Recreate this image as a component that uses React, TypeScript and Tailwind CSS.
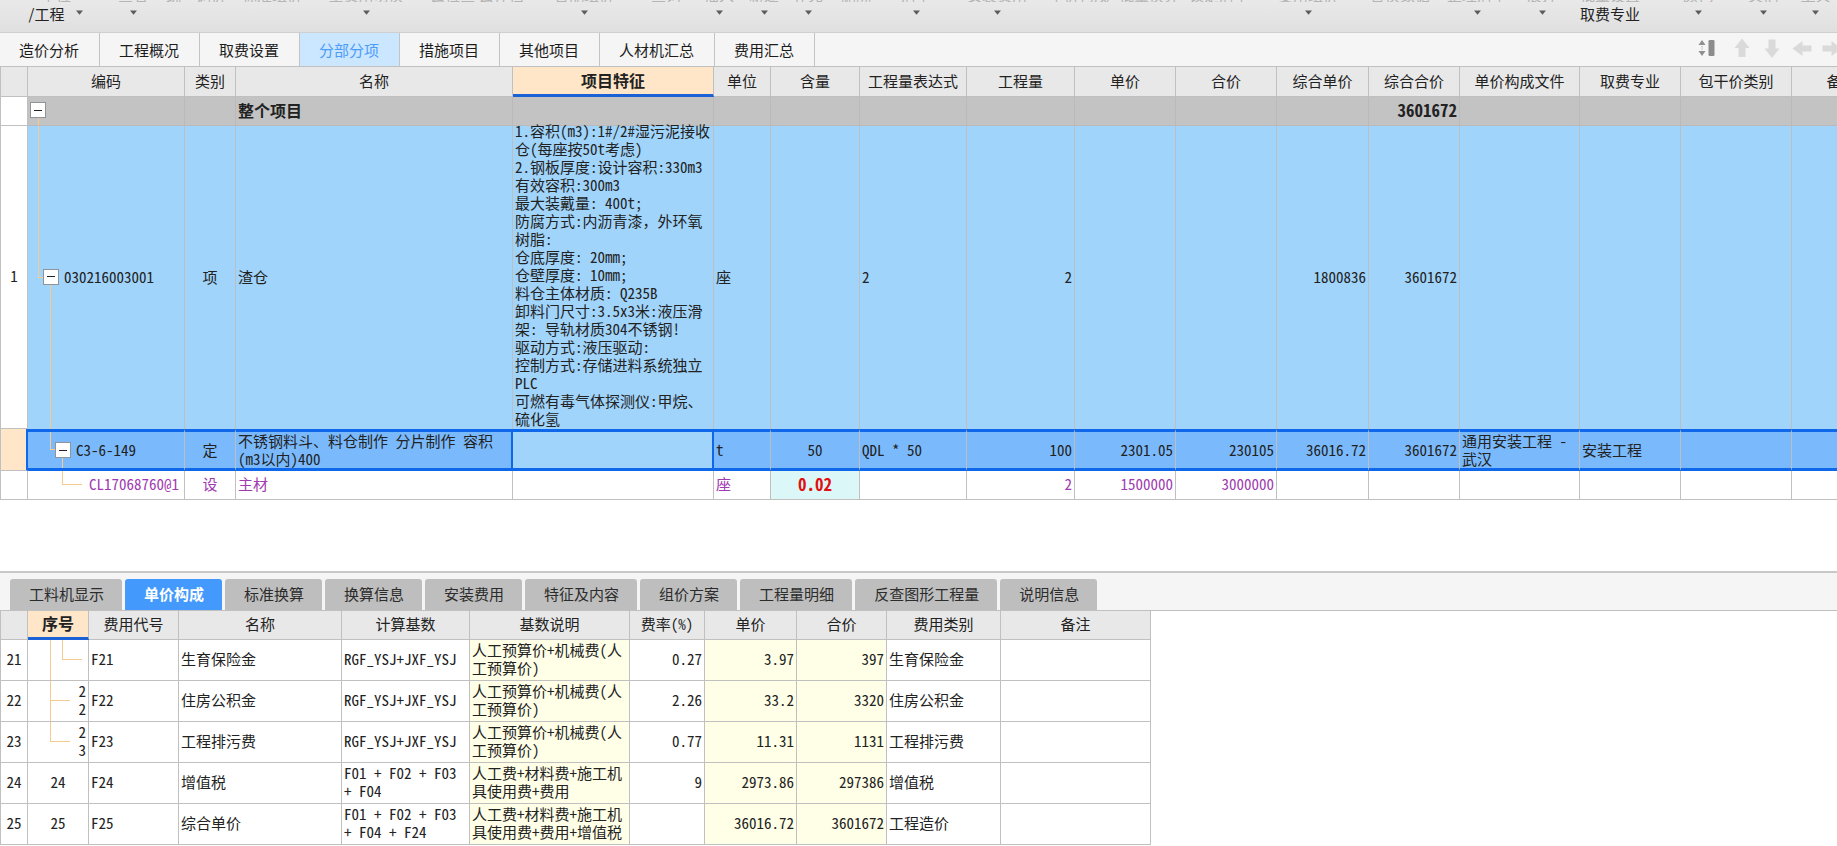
import type { ReactNode } from 'react';
import clsx from 'clsx';

type ToolItem = { width: string; label?: string; sub?: string; caret?: boolean };

const TOOLS: ToolItem[] = [
  { width: 'w-[108px] pl-1', label: '单位', sub: '/工程', caret: true },
  { width: 'w-[50px]', label: '查看', caret: true },
  { width: 'w-[76px]', label: '统一调价' },
  { width: 'w-[76px]', label: '标准组价' },
  { width: 'w-[112px]', label: '全费用切换', caret: true },
  { width: 'w-[110px]', label: '云检查 云存档' },
  { width: 'w-[104px]', label: '智能组价', caret: true },
  { width: 'w-[60px]', label: '查询' },
  { width: 'w-[46px]', label: '插入', caret: true },
  { width: 'w-[44px]', label: '新建', caret: true },
  { width: 'w-[44px]', label: '补充', caret: true },
  { width: 'w-[52px]', label: '删除' },
  { width: 'w-[68px]', label: '清单', caret: true },
  { width: 'w-[94px]', label: '安装费用', caret: true },
  { width: 'w-[70px]', label: '单价构成' },
  { width: 'w-[70px]', label: '批量换算' },
  { width: 'w-[70px]', label: '锁定清单' },
  { width: 'w-[108px]', label: '复用组价', caret: true },
  { width: 'w-[76px]', label: '替换数据' },
  { width: 'w-[78px]', label: '整理清单', caret: true },
  { width: 'w-[52px]', label: '展开', caret: true },
  { width: 'w-[84px]', label: '批量设置', sub: '取费专业' },
  { width: 'w-[92px]', label: '颜色', caret: true },
  { width: 'w-[38px]', label: '其他', caret: true },
  { width: 'w-[67px]', label: '工具', caret: true },
];

const MAIN_TABS = ['造价分析', '工程概况', '取费设置', '分部分项', '措施项目', '其他项目', '人材机汇总', '费用汇总'];

const DETAIL_TABS = [
  '工料机显示',
  '单价构成',
  '标准换算',
  '换算信息',
  '安装费用',
  '特征及内容',
  '组价方案',
  '工程量明细',
  '反查图形工程量',
  '说明信息',
];

const MAIN_COLS = [
  { title: '', width: 'w-[27px]' },
  { title: '编码', width: 'w-[157px]' },
  { title: '类别', width: 'w-[51px]' },
  { title: '名称', width: 'w-[277px]' },
  { title: '项目特征', width: 'w-[201px]' },
  { title: '单位', width: 'w-[57px]' },
  { title: '含量', width: 'w-[89px]' },
  { title: '工程量表达式', width: 'w-[107px]' },
  { title: '工程量', width: 'w-[108px]' },
  { title: '单价', width: 'w-[101px]' },
  { title: '合价', width: 'w-[101px]' },
  { title: '综合单价', width: 'w-[92px]' },
  { title: '综合合价', width: 'w-[91px]' },
  { title: '单价构成文件', width: 'w-[120px]' },
  { title: '取费专业', width: 'w-[101px]' },
  { title: '包干价类别', width: 'w-[111px]' },
  { title: '备注', width: 'w-[100px]' },
];

const DETAIL_COLS = [
  { title: '', width: 'w-[27px]' },
  { title: '序号', width: 'w-[61px]' },
  { title: '费用代号', width: 'w-[90px]' },
  { title: '名称', width: 'w-[163px]' },
  { title: '计算基数', width: 'w-[128px]' },
  { title: '基数说明', width: 'w-[160px]' },
  { title: '费率(%)', width: 'w-[75px]' },
  { title: '单价', width: 'w-[92px]' },
  { title: '合价', width: 'w-[90px]' },
  { title: '费用类别', width: 'w-[114px]' },
  { title: '备注', width: 'w-[150px]' },
];

const FEATURES = [
  '1.容积(m3):1#/2#湿污泥接收',
  '仓(每座按50t考虑)',
  '2.钢板厚度:设计容积:330m3',
  '有效容积:300m3',
  '最大装戴量: 400t;',
  '防腐方式:内沥青漆，外环氧',
  '树脂:',
  '仓底厚度: 20mm;',
  '仓壁厚度: 10mm;',
  '料仓主体材质: Q235B',
  '卸料门尺寸:3.5x3米:液压滑',
  '架: 导轨材质304不锈钢!',
  '驱动方式:液压驱动:',
  '控制方式:存储进料系统独立',
  'PLC',
  '可燃有毒气体探测仪:甲烷、',
  '硫化氢',
];

const DETAIL_ROWS = [
  { no: 21, code: 'F21', name: '生育保险金', base: ['RGF_YSJ+JXF_YSJ'], desc: ['人工预算价+机械费(人', '工预算价)'], rate: '0.27', price: '3.97', total: '397', kind: '生育保险金' },
  { no: 22, code: 'F22', name: '住房公积金', base: ['RGF_YSJ+JXF_YSJ'], desc: ['人工预算价+机械费(人', '工预算价)'], rate: '2.26', price: '33.2', total: '3320', kind: '住房公积金' },
  { no: 23, code: 'F23', name: '工程排污费', base: ['RGF_YSJ+JXF_YSJ'], desc: ['人工预算价+机械费(人', '工预算价)'], rate: '0.77', price: '11.31', total: '1131', kind: '工程排污费' },
  { no: 24, code: 'F24', name: '增值税', base: ['F01 + F02 + F03', '+ F04'], desc: ['人工费+材料费+施工机', '具使用费+费用'], rate: '9', price: '2973.86', total: '297386', kind: '增值税' },
  { no: 25, code: 'F25', name: '综合单价', base: ['F01 + F02 + F03', '+ F04 + F24'], desc: ['人工费+材料费+施工机', '具使用费+费用+增值税'], rate: '', price: '36016.72', total: '3601672', kind: '工程造价' },
];

function Lines({ items }: { items: string[] }) {
  return (
    <>
      {items.map((line, i) => (
        <span key={i} className="block whitespace-pre">
          {line}
        </span>
      ))}
    </>
  );
}

// grid cell; `edge` overrides the default padding and grey right and bottom borders
function Cell({ children, className, edge }: { children?: ReactNode; className?: string; edge?: string }) {
  return (
    <td
      className={clsx('relative px-0.5 pt-0 whitespace-nowrap', edge ?? 'border-r border-b border-[#c0c0c0] pb-0.5', className)}>
      {children}
    </td>
  );
}

function HeadCell({ title, active }: { title: string; active: boolean }) {
  return (
    <th
      className={clsx(
        'border-r border-r-[#c0c0c0] px-0 pt-0 pb-0.5 text-center whitespace-nowrap',
        active
          ? 'border-b-3 border-b-[#1a62d6] bg-[#ffe6c8] text-[16px] font-bold'
          : 'border-b border-b-[#c0c0c0] bg-[#e8e8e8] font-normal',
      )}>
      {title}
    </th>
  );
}

function Toggle() {
  return (
    <button
      type="button"
      aria-label="折叠"
      className="relative z-10 flex size-4 shrink-0 items-center justify-center border border-[#8f9499] bg-white">
      <span className="h-px w-2 bg-[#222]" />
    </button>
  );
}

function TreeLine({ className }: { className: string }) {
  return <span className={clsx('absolute border-[#f5cb90]', className)} />;
}

function Caret() {
  return (
    <svg width="7" height="5" viewBox="0 0 7 5" className="shrink-0">
      <path d="M0 0.5h7L3.5 4.8z" fill="#5c5c5c" />
    </svg>
  );
}

function Toolbar() {
  return (
    <div className="flex h-[33px] overflow-hidden border-b border-[#cfcfcf] bg-linear-to-b from-[#e9e9e9] to-[#e0e0e0] font-['Noto_Sans_CJK_SC',sans-serif]">
      {TOOLS.map((tool, i) => (
        <button key={i} type="button" className={clsx('flex shrink-0 flex-col items-center', tool.width)}>
          <span className="flex h-0.5 items-end overflow-hidden leading-[15px] whitespace-nowrap text-[#b4b4b4]">
            {tool.label}
          </span>
          <span className="flex h-6 items-center gap-3">
            {tool.sub ? <span className="leading-6">{tool.sub}</span> : null}
            {tool.caret ? (
              <span className="pb-1">
                <Caret />
              </span>
            ) : null}
          </span>
        </button>
      ))}
    </div>
  );
}

function MoveButtons() {
  return (
    <div className="-mr-[5px] ml-auto flex items-center gap-[10px] pb-1">
      <button type="button" aria-label="行高" className="mr-[5px]">
        <svg width="20" height="20" viewBox="0 0 20 20">
          <path d="M5 2l3.5 5h-7zM5 18l3.5-5h-7z" fill="#8f8f8f" />
          <path d="M5 8v4" stroke="#b5b5b5" strokeWidth="1.2" strokeDasharray="1.4 1" />
          <rect x="11.5" y="2" width="6" height="16" rx="1.2" fill="#8c8c8c" />
        </svg>
      </button>
      <button type="button" aria-label="上移">
        <svg width="20" height="20" viewBox="0 0 20 20" fill="#dadada">
          <path d="M10 0.5l7.500 9.500h-4v9h-7v-9h-4z" />
        </svg>
      </button>
      <button type="button" aria-label="下移">
        <svg width="20" height="20" viewBox="0 0 20 20" fill="#dadada">
          <path d="M10 20l7.500-9.500h-4v-9h-7v9h-4z" />
        </svg>
      </button>
      <button type="button" aria-label="升级">
        <svg width="20" height="20" viewBox="0 0 20 20" fill="#dadada">
          <path d="M0.500 10.500l10-7.500v4.500h9v6h-9v4.500z" />
        </svg>
      </button>
      <button type="button" aria-label="降级">
        <svg width="20" height="20" viewBox="0 0 20 20" fill="#dadada">
          <path d="M19.500 10.500l-10-7.500v4.500h-9v6h9v4.500z" />
        </svg>
      </button>
    </div>
  );
}

function MainTabs() {
  return (
    <div className="flex h-[33px] overflow-hidden bg-[#f5f5f5] font-['Noto_Sans_CJK_SC',sans-serif]">
      {MAIN_TABS.map((tab) => (
        <button
          key={tab}
          type="button"
          className={clsx(
            'shrink-0 border-r border-[#c4c4c4] pr-5 pl-[19px] leading-5 whitespace-nowrap',
            tab === '分部分项' ? 'bg-[#cbe6ff] text-[#4a9cf8]' : 'text-[#1c1c1c]',
          )}>
          {tab}
        </button>
      ))}
      <MoveButtons />
    </div>
  );
}

function MainTable() {
  const gray = { edge: 'border-r border-b border-[#bababa] pb-0.5', fill: 'bg-[#c3c3c3] font-bold' };
  const blue = { edge: 'border-r border-[#bcbfc2] pb-0.5', fill: 'bg-[#a0d4fb]' };
  const sel = { edge: 'border-r border-y-3 border-r-[#bcbfc2] border-y-[#0f68ea] pb-0', fill: 'bg-[#7abafc]' };
  const selEdge = 'border-r-2 border-y-3 border-[#0f68ea] pb-0';
  return (
    <div className="overflow-hidden">
      <table className="w-[1891px] table-fixed border-separate border-spacing-0 border-t border-l border-[#c0c0c0]">
        <colgroup>
          {MAIN_COLS.map((c, i) => (
            <col key={i} className={c.width} />
          ))}
        </colgroup>
        <thead>
          <tr className="h-[30px]">
            {MAIN_COLS.map((c, i) => (
              <HeadCell key={i} title={c.title} active={c.title === '项目特征'} />
            ))}
          </tr>
        </thead>
        <tbody>
          <tr className="h-[29px]">
            <Cell />
            <Cell edge={gray.edge} className={gray.fill}>
              <TreeLine className="top-1/2 bottom-0 left-[10px] border-l" />
              <Toggle />
            </Cell>
            <Cell edge={gray.edge} className={gray.fill} />
            <Cell edge={gray.edge} className={clsx(gray.fill, 'text-[16px]')}>
              整个项目
            </Cell>
            {MAIN_COLS.slice(4, 12).map((c) => (
              <Cell key={c.title} edge={gray.edge} className={gray.fill} />
            ))}
            <Cell edge={gray.edge} className={clsx(gray.fill, 'text-right text-[17px]')}>
              3601672
            </Cell>
            {MAIN_COLS.slice(13).map((c) => (
              <Cell key={c.title} edge={gray.edge} className={gray.fill} />
            ))}
          </tr>
          <tr className="h-[303px]">
            <Cell className="text-center">1</Cell>
            <Cell edge={blue.edge} className={blue.fill}>
              <TreeLine className="top-0 bottom-1/2 left-[10px] w-2 border-b border-l" />
              <TreeLine className="top-1/2 bottom-0 left-[22px] border-l" />
              <div className="flex items-center gap-[5px] pl-[13px]">
                <Toggle />
                030216003001
              </div>
            </Cell>
            <Cell edge={blue.edge} className={clsx(blue.fill, 'text-center')}>
              项
            </Cell>
            <Cell edge={blue.edge} className={blue.fill}>
              渣仓
            </Cell>
            <Cell edge={blue.edge} className={blue.fill}>
              <div className="-mt-1.5 -mb-0.5">
                <Lines items={FEATURES} />
              </div>
            </Cell>
            <Cell edge={blue.edge} className={blue.fill}>
              座
            </Cell>
            <Cell edge={blue.edge} className={blue.fill} />
            <Cell edge={blue.edge} className={blue.fill}>
              2
            </Cell>
            <Cell edge={blue.edge} className={clsx(blue.fill, 'text-right')}>
              2
            </Cell>
            <Cell edge={blue.edge} className={blue.fill} />
            <Cell edge={blue.edge} className={blue.fill} />
            <Cell edge={blue.edge} className={clsx(blue.fill, 'text-right')}>
              1800836
            </Cell>
            <Cell edge={blue.edge} className={clsx(blue.fill, 'text-right')}>
              3601672
            </Cell>
            {MAIN_COLS.slice(13).map((c) => (
              <Cell key={c.title} edge={blue.edge} className={blue.fill} />
            ))}
          </tr>
          <tr className="h-[42px]">
            <Cell edge="border-r-2 border-b border-r-[#0f68ea] border-b-[#c0c0c0]" className="bg-[#ffe6c8]" />
            <Cell edge={sel.edge} className={sel.fill}>
              <TreeLine className="top-0 bottom-1/2 left-[22px] w-2 border-b border-l" />
              <TreeLine className="top-1/2 bottom-0 left-[34px] border-l" />
              <div className="flex items-center gap-[5px] pl-[25px]">
                <Toggle />
                C3-6-149
              </div>
            </Cell>
            <Cell edge={sel.edge} className={clsx(sel.fill, 'text-center')}>
              定
            </Cell>
            <Cell edge={selEdge} className={sel.fill}>
              <Lines items={['不锈钢料斗、料仓制作 分片制作 容积', '(m3以内)400']} />
            </Cell>
            <Cell edge={selEdge} className={blue.fill} />
            <Cell edge={sel.edge} className={sel.fill}>
              t
            </Cell>
            <Cell edge={sel.edge} className={clsx(sel.fill, 'text-center')}>
              50
            </Cell>
            <Cell edge={sel.edge} className={sel.fill}>
              QDL * 50
            </Cell>
            {['100', '2301.05', '230105', '36016.72', '3601672'].map((value) => (
              <Cell key={value} edge={sel.edge} className={clsx(sel.fill, 'text-right')}>
                {value}
              </Cell>
            ))}
            <Cell edge={sel.edge} className={sel.fill}>
              <Lines items={['通用安装工程 -', '武汉']} />
            </Cell>
            <Cell edge={sel.edge} className={sel.fill}>
              安装工程
            </Cell>
            <Cell edge={sel.edge} className={sel.fill} />
            <Cell edge={selEdge} className={sel.fill} />
          </tr>
          <tr className="h-[29px] text-[#a03cb0]">
            <Cell />
            <Cell>
              <TreeLine className="top-0 bottom-1/2 left-[34px] w-5 border-b border-l" />
              <div className="pl-[59px]">CL17068760@1</div>
            </Cell>
            <Cell className="text-center">设</Cell>
            <Cell>主材</Cell>
            <Cell />
            <Cell>座</Cell>
            <Cell className="bg-[#dbf7f7] text-center text-[17px] font-bold text-[#e01010]">0.02</Cell>
            <Cell />
            <Cell className="text-right">2</Cell>
            <Cell className="text-right">1500000</Cell>
            <Cell className="text-right">3000000</Cell>
            {MAIN_COLS.slice(11).map((c) => (
              <Cell key={c.title} />
            ))}
          </tr>
        </tbody>
      </table>
    </div>
  );
}

function SeqCell({ no }: { no: number }) {
  if (no > 23) return <Cell className="text-center">{no}</Cell>;
  if (no === 21) {
    return (
      <Cell>
        <TreeLine className="inset-y-0 left-[22px] border-l" />
        <TreeLine className="top-0 bottom-1/2 left-[34px] w-5 border-b border-l" />
      </Cell>
    );
  }
  return (
    <Cell>
      <TreeLine className="top-0 bottom-1/2 left-[22px] w-5 border-b border-l" />
      {no === 22 ? <TreeLine className="top-1/2 bottom-0 left-[22px] border-l" /> : null}
      <div className="text-right">
        <Lines items={String(no).split('')} />
      </div>
    </Cell>
  );
}

function DetailPanel() {
  const pale = 'bg-[#ffffe8]';
  return (
    <section className="mt-[71px] border-t-2 border-[#c8c8c8] bg-white">
      <div className="flex gap-[3px] overflow-hidden bg-[#f5f5f5] px-[10px] pt-[6px] font-['Noto_Sans_CJK_SC',sans-serif]">
        {DETAIL_TABS.map((tab) => (
          <button
            key={tab}
            type="button"
            className={clsx(
              'h-[31px] shrink-0 rounded-t-[3px] pr-[18px] pb-0.5 pl-[19px] whitespace-nowrap',
              tab === '单价构成' ? 'bg-[#4499fd] font-bold text-white' : 'bg-[#bebebe] text-[#2c2c2c]',
            )}>
            {tab}
          </button>
        ))}
      </div>
      <div className="overflow-hidden border-t border-[#c0c0c0]">
        <table className="w-[1151px] table-fixed border-separate border-spacing-0 border-l border-[#c0c0c0]">
          <colgroup>
            {DETAIL_COLS.map((c, i) => (
              <col key={i} className={c.width} />
            ))}
          </colgroup>
          <thead>
            <tr className="h-[29px]">
              {DETAIL_COLS.map((c, i) => (
                <HeadCell key={i} title={c.title} active={c.title === '序号'} />
              ))}
            </tr>
          </thead>
          <tbody>
            {DETAIL_ROWS.map((row) => (
              <tr key={row.no} className="h-[41px]">
                <Cell className="text-center">{row.no}</Cell>
                <SeqCell no={row.no} />
                <Cell>{row.code}</Cell>
                <Cell>{row.name}</Cell>
                <Cell>
                  <Lines items={row.base} />
                </Cell>
                <Cell className={pale}>
                  <Lines items={row.desc} />
                </Cell>
                <Cell className="text-right">{row.rate}</Cell>
                <Cell className={clsx(pale, 'text-right')}>{row.price}</Cell>
                <Cell className={clsx(pale, 'text-right')}>{row.total}</Cell>
                <Cell>{row.kind}</Cell>
                <Cell />
              </tr>
            ))}
          </tbody>
        </table>
      </div>
    </section>
  );
}

export default function App() {
  return (
    <div className="min-h-screen overflow-hidden bg-white font-['Noto_Sans_Mono_CJK_SC','Noto_Sans_CJK_SC',monospace] text-[15px] leading-[18px] text-[#222]">
      <Toolbar />
      <MainTabs />
      <MainTable />
      <DetailPanel />
    </div>
  );
}
